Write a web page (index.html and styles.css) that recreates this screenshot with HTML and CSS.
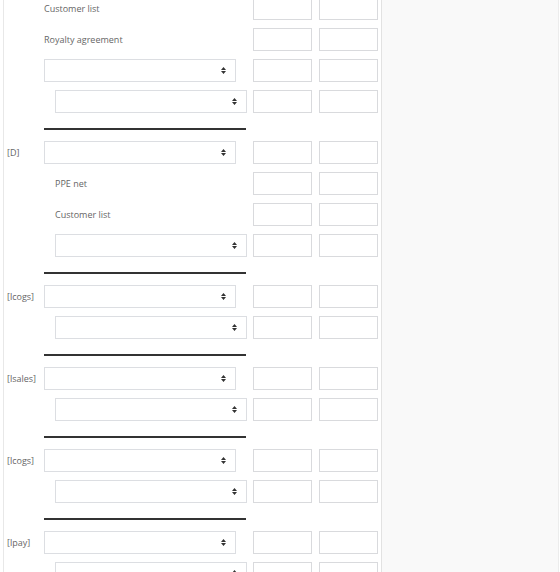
FILE: index.html
```html
<!DOCTYPE html>
<html>
<head>
    <title>Journal entries</title>
    <link rel="stylesheet" href="styles.css">
</head>
<body>
<div class="page">
    <div class="panel">
        <div class="entry first">
            <div class="tag"></div>
            <div class="field"><span class="acct">Customer list</span></div>
            <input type="text" class="num"><input type="text" class="num">
        </div>
        <div class="entry">
            <div class="tag"></div>
            <div class="field"><span class="acct">Royalty agreement</span></div>
            <input type="text" class="num"><input type="text" class="num">
        </div>
        <div class="entry">
            <div class="tag"></div>
            <div class="field"><div class="sel"><select></select><svg viewBox="0 0 5 7"><path d="M2.5 0 5 3H0zM0 4h5L2.5 7z"/></svg></div></div>
            <input type="text" class="num"><input type="text" class="num">
        </div>
        <div class="entry">
            <div class="tag"></div>
            <div class="field"><div class="sel sub"><select></select><svg viewBox="0 0 5 7"><path d="M2.5 0 5 3H0zM0 4h5L2.5 7z"/></svg></div></div>
            <input type="text" class="num"><input type="text" class="num">
        </div>
        <div class="rule"></div>

        <div class="entry">
            <div class="tag">[D]</div>
            <div class="field"><div class="sel"><select></select><svg viewBox="0 0 5 7"><path d="M2.5 0 5 3H0zM0 4h5L2.5 7z"/></svg></div></div>
            <input type="text" class="num"><input type="text" class="num">
        </div>
        <div class="entry">
            <div class="tag"></div>
            <div class="field"><span class="acct sub">PPE net</span></div>
            <input type="text" class="num"><input type="text" class="num">
        </div>
        <div class="entry">
            <div class="tag"></div>
            <div class="field"><span class="acct sub">Customer list</span></div>
            <input type="text" class="num"><input type="text" class="num">
        </div>
        <div class="entry">
            <div class="tag"></div>
            <div class="field"><div class="sel sub"><select></select><svg viewBox="0 0 5 7"><path d="M2.5 0 5 3H0zM0 4h5L2.5 7z"/></svg></div></div>
            <input type="text" class="num"><input type="text" class="num">
        </div>
        <div class="rule"></div>

        <div class="entry">
            <div class="tag">[lcogs]</div>
            <div class="field"><div class="sel"><select></select><svg viewBox="0 0 5 7"><path d="M2.5 0 5 3H0zM0 4h5L2.5 7z"/></svg></div></div>
            <input type="text" class="num"><input type="text" class="num">
        </div>
        <div class="entry">
            <div class="tag"></div>
            <div class="field"><div class="sel sub"><select></select><svg viewBox="0 0 5 7"><path d="M2.5 0 5 3H0zM0 4h5L2.5 7z"/></svg></div></div>
            <input type="text" class="num"><input type="text" class="num">
        </div>
        <div class="rule"></div>

        <div class="entry">
            <div class="tag">[lsales]</div>
            <div class="field"><div class="sel"><select></select><svg viewBox="0 0 5 7"><path d="M2.5 0 5 3H0zM0 4h5L2.5 7z"/></svg></div></div>
            <input type="text" class="num"><input type="text" class="num">
        </div>
        <div class="entry">
            <div class="tag"></div>
            <div class="field"><div class="sel sub"><select></select><svg viewBox="0 0 5 7"><path d="M2.5 0 5 3H0zM0 4h5L2.5 7z"/></svg></div></div>
            <input type="text" class="num"><input type="text" class="num">
        </div>
        <div class="rule"></div>

        <div class="entry">
            <div class="tag">[lcogs]</div>
            <div class="field"><div class="sel"><select></select><svg viewBox="0 0 5 7"><path d="M2.5 0 5 3H0zM0 4h5L2.5 7z"/></svg></div></div>
            <input type="text" class="num"><input type="text" class="num">
        </div>
        <div class="entry">
            <div class="tag"></div>
            <div class="field"><div class="sel sub"><select></select><svg viewBox="0 0 5 7"><path d="M2.5 0 5 3H0zM0 4h5L2.5 7z"/></svg></div></div>
            <input type="text" class="num"><input type="text" class="num">
        </div>
        <div class="rule"></div>

        <div class="entry">
            <div class="tag">[lpay]</div>
            <div class="field"><div class="sel"><select></select><svg viewBox="0 0 5 7"><path d="M2.5 0 5 3H0zM0 4h5L2.5 7z"/></svg></div></div>
            <input type="text" class="num"><input type="text" class="num">
        </div>
        <div class="entry">
            <div class="tag"></div>
            <div class="field"><div class="sel sub"><select></select><svg viewBox="0 0 5 7"><path d="M2.5 0 5 3H0zM0 4h5L2.5 7z"/></svg></div></div>
            <input type="text" class="num"><input type="text" class="num">
        </div>
    </div>
    <div class="side"></div>
</div>
</body>
</html>
```

FILE: styles.css
```css
html, body {
    margin: 0;
    height: 100%;
    overflow: hidden;
    background-color: #fff;
}
body {
    font-family: "Open Sans", "Noto Sans", sans-serif;
    font-size: 9px;
    color: #666;
}
.page {
    display: flex;
    height: 100%;
    padding-left: 3px;
}
.panel {
    width: 377px;
    background-color: #fff;
    border-left: 1px solid #e8e8e8;
    border-right: 1px solid #e2e2e2;
    flex-shrink: 0;
}
.side {
    width: 176px;
    background-color: #f9f9f9;
    border-right: 1px solid #ececec;
}
.entry {
    display: flex;
    align-items: center;
    height: 23px;
    margin-bottom: 8px;
}
.entry.first {
    margin-top: -3px;
}
.tag {
    width: 40px;
    box-sizing: border-box;
    padding-left: 3px;
    white-space: nowrap;
}
.field {
    width: 203px;
    height: 100%;
    display: flex;
    align-items: center;
}
.acct.sub {
    margin-left: 11px;
}
.sel {
    position: relative;
    width: 192px;
    height: 100%;
}
.sel.sub {
    margin-left: 11px;
}
.sel select {
    appearance: none;
    -webkit-appearance: none;
    width: 100%;
    height: 100%;
    margin: 0;
    box-sizing: border-box;
    border: 1px solid #dcdee2;
    border-radius: 0;
    background-color: #fff;
}
.sel svg {
    position: absolute;
    right: 10px;
    top: 8px;
    width: 5px;
    height: 7px;
    fill: #333;
}
.num {
    width: 59px;
    height: 23px;
    margin: 0 0 0 7px;
    padding: 0;
    box-sizing: border-box;
    border: 1px solid #d9dadd;
    border-radius: 0;
    background-color: #fff;
}
.field + .num {
    margin-left: 6px;
}
.rule {
    margin-left: 40px;
    width: 202px;
    padding-top: 7px;
    border-bottom: 2px solid #333;
    margin-bottom: 11px;
}
```
